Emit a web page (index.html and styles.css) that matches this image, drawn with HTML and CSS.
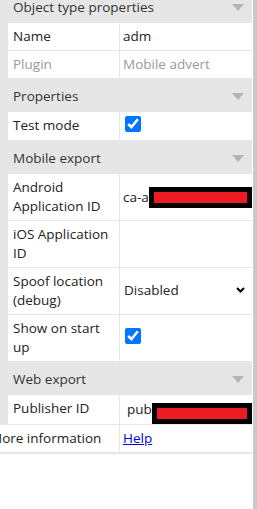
FILE: index.html
```html
<!DOCTYPE html>
<html lang="en">
<head>
  <meta charset="UTF-8">
  <title>Properties</title>
  <link rel="stylesheet" href="styles.css">
</head>
<body>

  <div class="layout">
    <div class="panel">

      <div class="cat first">
        <span>Object type properties</span>
        <svg class="caret" width="12" height="7" viewBox="0 0 12 7"><path d="M0 0h12L6 7z"/></svg>
      </div>
      <div class="group">
        <div class="prop">
          <div class="name">Name</div>
          <div class="val">adm</div>
        </div>
        <div class="prop readonly">
          <div class="name">Plugin</div>
          <div class="val">Mobile advert</div>
        </div>
      </div>

      <div class="cat">
        <span>Properties</span>
        <svg class="caret" width="12" height="7" viewBox="0 0 12 7"><path d="M0 0h12L6 7z"/></svg>
      </div>
      <div class="group">
        <div class="prop">
          <div class="name">Test mode</div>
          <div class="val"><input type="checkbox" class="check" checked></div>
        </div>
      </div>

      <div class="cat">
        <span>Mobile export</span>
        <svg class="caret" width="12" height="7" viewBox="0 0 12 7"><path d="M0 0h12L6 7z"/></svg>
      </div>
      <div class="group">
        <div class="prop">
          <div class="name">Android Application ID</div>
          <div class="val">ca-a<span class="redact"></span></div>
        </div>
        <div class="prop">
          <div class="name">iOS Application ID</div>
          <div class="val"></div>
        </div>
        <div class="prop">
          <div class="name">Spoof location (debug)</div>
          <div class="val">
            <select class="pick">
              <option>Disabled</option>
              <option>Enabled</option>
            </select>
            <svg class="chevron" width="9" height="6" viewBox="0 0 9 6"><path d="M1 1l3.5 3.5L8 1" fill="none" stroke="#000" stroke-width="2"/></svg>
          </div>
        </div>
        <div class="prop">
          <div class="name">Show on start up</div>
          <div class="val"><input type="checkbox" class="check" checked></div>
        </div>
      </div>

      <div class="cat">
        <span>Web export</span>
        <svg class="caret" width="12" height="7" viewBox="0 0 12 7"><path d="M0 0h12L6 7z"/></svg>
      </div>
      <div class="group">
        <div class="prop">
          <div class="name">Publisher ID</div>
          <div class="val indent">pub<span class="redact low"></span></div>
        </div>
      </div>

      <div class="prop top">
        <div class="name">More information</div>
        <div class="val"><a href="#">Help</a></div>
      </div>

    </div>
    <div class="scrollbar"></div>
  </div>

</body>
</html>
```

FILE: styles.css
```css
body {
  margin: 0;
  font-family: 'Open Sans', sans-serif;
  font-size: 13.5px;
  line-height: 19px;
  color: #222;
  background: white;
  overflow: hidden;
}
.layout {
  display: flex;
  height: 509px;
}
.panel {
  width: 252px;
  margin-top: -10px;
  margin-right: 1px;
  overflow: hidden;
}
.scrollbar {
  width: 4px;
  background: #c9c9c9;
}
.cat {
  height: 33px;
  box-sizing: border-box;
  padding: 8px 8px 6px 13px;
  background: #e6e6e6;
  color: #333;
  display: flex;
  align-items: center;
  justify-content: space-between;
}
.caret {
  fill: #b4b4b4;
}
.group {
  background: #e6e6e6;
  padding: 0 0 1px 8px;
  display: flex;
  flex-direction: column;
  gap: 1px;
}
.prop {
  display: grid;
  grid-template-columns: 111px 1fr;
  column-gap: 1px;
  background: #e6e6e6;
}
.prop .name,
.prop .val {
  background: white;
  padding: 4px 0 4px 5px;
  min-height: 19px;
}
.prop .name {
  padding-right: 6px;
}
.prop .val {
  padding-left: 3px;
  display: flex;
  align-items: center;
  min-width: 0;
}
.prop .val.indent {
  padding-left: 7px;
}
.readonly .name,
.readonly .val {
  color: #9a9a9a;
  white-space: nowrap;
}
.check {
  width: 16px;
  height: 16px;
  margin: 0 0 4px 2px;
}
.pick {
  flex: 1;
  appearance: none;
  border: none;
  background: transparent;
  font: inherit;
  color: #222;
  padding: 0;
  margin: 0 0 2px 1px;
}
.chevron {
  margin: 0 7px 2px 0;
}
.redact {
  flex: 1;
  height: 21px;
  box-sizing: border-box;
  border: 5px solid black;
  background: #ed1c24;
}
.redact.low {
  position: relative;
  top: 4px;
}
.prop.top {
  grid-template-columns: 119px 1fr;
  border-bottom: 2px solid #e6e6e6;
}
.prop.top .name {
  text-indent: -15px;
  white-space: nowrap;
  overflow: hidden;
}
a {
  color: #0000ee;
}
```
